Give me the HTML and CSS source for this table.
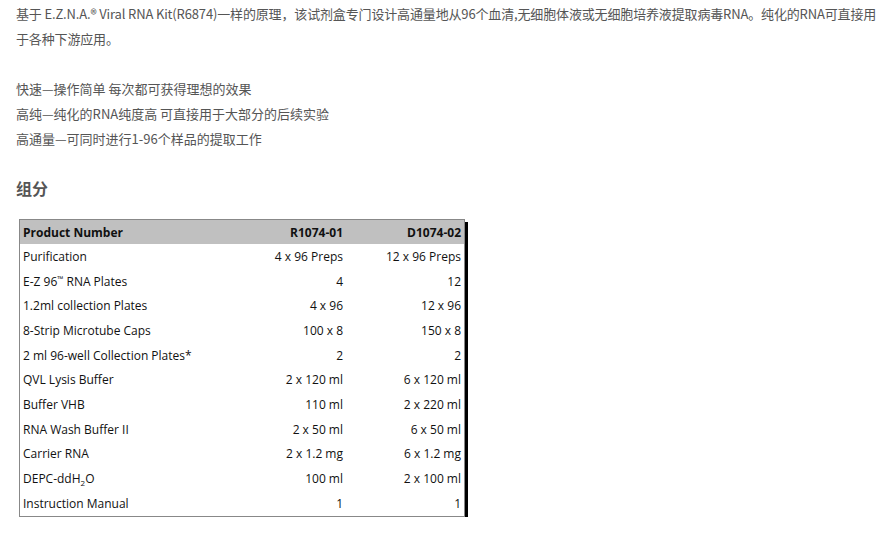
FILE: index.html
```html
<!DOCTYPE html>
<html>
<head>
<meta charset="utf-8">
<link rel="stylesheet" href="styles.css">
</head>
<body>
<div class="page">
  <p class="intro">基于 E.Z.N.A.® Viral RNA Kit(R6874)一样的原理，该试剂盒专门设计高通量地从96个血清,无细胞体液或无细胞培养液提取病毒RNA。纯化的RNA可直接用于各种下游应用。</p>
  <ul class="features">
    <li>快速—操作简单 每次都可获得理想的效果</li>
    <li>高纯—纯化的RNA纯度高 可直接用于大部分的后续实验</li>
    <li>高通量—可同时进行1-96个样品的提取工作</li>
  </ul>
  <h3 class="section-title">组分</h3>
  <div class="table-wrap">
    <table class="spec">
      <thead>
        <tr><th class="name">Product Number</th><th class="num">R1074-01</th><th class="num">D1074-02</th></tr>
      </thead>
      <tbody>
        <tr><td>Purification</td><td class="num">4 x 96 Preps</td><td class="num">12 x 96 Preps</td></tr>
        <tr><td>E-Z 96<span class="tm">™</span> RNA Plates</td><td class="num">4</td><td class="num">12</td></tr>
        <tr><td>1.2ml collection Plates</td><td class="num">4 x 96</td><td class="num">12 x 96</td></tr>
        <tr><td>8-Strip Microtube Caps</td><td class="num">100 x 8</td><td class="num">150 x 8</td></tr>
        <tr><td>2 ml 96-well Collection Plates*</td><td class="num">2</td><td class="num">2</td></tr>
        <tr><td>QVL Lysis Buffer</td><td class="num">2 x 120 ml</td><td class="num">6 x 120 ml</td></tr>
        <tr><td>Buffer VHB</td><td class="num">110 ml</td><td class="num">2 x 220 ml</td></tr>
        <tr><td>RNA Wash Buffer II</td><td class="num">2 x 50 ml</td><td class="num">6 x 50 ml</td></tr>
        <tr><td>Carrier RNA</td><td class="num">2 x 1.2 mg</td><td class="num">6 x 1.2 mg</td></tr>
        <tr><td>DEPC-ddH<sub>2</sub>O</td><td class="num">100 ml</td><td class="num">2 x 100 ml</td></tr>
        <tr><td>Instruction Manual</td><td class="num">1</td><td class="num">1</td></tr>
      </tbody>
    </table>
  </div>
</div>
</body>
</html>
```
FILE: styles.css
```css
html, body {
  margin: 0;
  padding: 0;
  background: #fff;
}
.page {
  padding: 0 0 0 16px;
  font-family: "Noto Sans CJK SC", "Noto Sans", sans-serif;
  color: #555;
  font-size: 13px;
}
.intro {
  margin: 0;
  padding-top: 1px;
  line-height: 25px;
  letter-spacing: -0.15px;
}
.features {
  list-style: none;
  margin: 25px 0 0 0;
  padding: 0;
  line-height: 25px;
}
.section-title {
  margin: 25px 0 0 0;
  font-size: 16px;
  font-weight: bold;
  line-height: 24px;
  color: #555;
}
.table-wrap {
  margin: 19px 0 0 3px;
  width: 444px;
  border: 1px solid #888;
  box-shadow: 3px 3px 0 #000;
}
.spec {
  width: 100%;
  border-collapse: collapse;
  font-family: "Open Sans", "DejaVu Sans", sans-serif;
  font-size: 12px;
  color: #111;
}
.spec th {
  background: #c0c0c0;
  height: 24px;
  font-weight: bold;
  padding: 0 3px;
  text-align: left;
}
.spec td {
  height: 24.7px;
  padding: 0 3px;
}
.spec .num {
  text-align: right;
}
.spec th.num {
  text-align: right;
}
.spec tr > :nth-child(2) {
  width: 120px;
}
.spec tr > :nth-child(3) {
  width: 112px;
}
.tm {
  font-size: 8px;
  vertical-align: 4px;
}
sub {
  font-size: 8px;
  line-height: 0;
}
```
